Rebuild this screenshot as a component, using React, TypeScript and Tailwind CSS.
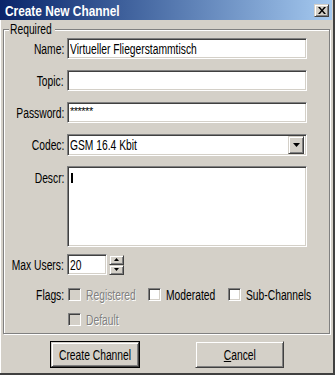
import React from "react";

const sunken =
  "border border-t-[#808080] border-l-[#808080] border-r-white border-b-white shadow-[inset_1px_1px_0_#404040,inset_-1px_-1px_0_#d4d0c8]";
const raised =
  "border border-t-[#d4d0c8] border-l-[#d4d0c8] border-r-[#404040] border-b-[#404040] shadow-[inset_1px_1px_0_#ffffff,inset_-1px_-1px_0_#808080] bg-[#d4d0c8]";

function T({ children, o = "l" }: { children: React.ReactNode; o?: "l" | "r" | "c" }) {
  const origin = o === "l" ? "origin-left" : o === "r" ? "origin-right" : "origin-center";
  return <span className={`inline-block whitespace-nowrap scale-x-[0.735] ${origin}`}>{children}</span>;
}

function Label({ children }: { children: React.ReactNode }) {
  return (
    <div className="w-[59px] shrink-0 flex justify-end leading-none">
      <T o="r">{children}</T>
    </div>
  );
}

function Row({ label, mt, children }: { label: string; mt: string; children: React.ReactNode }) {
  return (
    <div className={`flex items-center ${mt}`}>
      <Label>{label}</Label>
      <div className="ml-[3px]">{children}</div>
    </div>
  );
}

function Check({ label, disabled }: { label: string; disabled?: boolean }) {
  return (
    <div className="flex items-center w-[80px]">
      <div className={`w-[13px] h-[13px] shrink-0 ${sunken} ${disabled ? "bg-[#d4d0c8]" : "bg-white"}`} />
      <span
        className={`ml-[5px] leading-none ${
          disabled ? "text-[#808080] [text-shadow:1px_1px_0_#ffffff]" : "text-black"
        }`}
      >
        <T>{label}</T>
      </span>
    </div>
  );
}

export default function App() {
  return (
    <div className="w-[335px] h-[375px] bg-[#d4d0c8] border-r-2 border-b-2 border-[#404040] flex flex-col text-[14px] text-black font-['Liberation_Sans',Arial,sans-serif] overflow-hidden">
      <div className="h-[20px] mr-[1px] flex items-center bg-gradient-to-r from-[#0a246a] to-[#a6caf0] pl-[5px] pr-[3px] shrink-0">
        <span className="text-white font-bold text-[15px] leading-none inline-block whitespace-nowrap scale-x-[0.79] origin-left">
          Create New Channel
        </span>
        <div className={`ml-auto w-[15px] h-[13px] flex items-center justify-center ${raised}`}>
          <svg width="8" height="7" viewBox="0 0 8 7">
            <path d="M0 0h2l2 2.5L6 0h2L5 3.5 8 7H6L4 4.5 2 7H0l3-3.5z" fill="#000" />
          </svg>
        </div>
      </div>
      <div className="border-l border-white flex-1 flex flex-col">
        <div className="relative mt-[9px] ml-[2px] w-[327px] border border-[#808080] shadow-[1px_1px_0_#ffffff,inset_1px_1px_0_#ffffff] pt-[8px] pb-[7px] pl-[1px]">
          <div className="absolute -top-[8px] left-[5px] px-[1px] bg-[#d4d0c8] leading-none w-[46px]">
            <T>Required</T>
          </div>
          <Row label="Name:" mt="">
            <div className={`w-[240px] h-[21px] bg-white ${sunken} flex items-center pl-[2px] leading-none`}>
              <T>Virtueller Fliegerstammtisch</T>
            </div>
          </Row>
          <Row label="Topic:" mt="mt-[11px]">
            <div className={`w-[240px] h-[21px] bg-white ${sunken}`} />
          </Row>
          <Row label="Password:" mt="mt-[11px]">
            <div className={`w-[240px] h-[21px] bg-white ${sunken} pl-[2px] pt-[3px] text-[11px] leading-none tracking-[-0.5px]`}>
              ******
            </div>
          </Row>
          <Row label="Codec:" mt="mt-[11px]">
            <div className={`w-[240px] h-[22px] bg-white ${sunken} flex items-center pl-[2px] pr-[2px] leading-none`}>
              <T>GSM 16.4 Kbit</T>
              <div className={`ml-auto w-[16px] h-[18px] flex items-center justify-center ${raised}`}>
                <svg width="7" height="4" viewBox="0 0 7 4">
                  <path d="M0 0h7L3.5 4z" fill="#000" />
                </svg>
              </div>
            </div>
          </Row>
          <div className="flex mt-[10px]">
            <div className="pt-[5px]">
              <Label>Descr:</Label>
            </div>
            <div className={`ml-[3px] w-[240px] h-[81px] bg-white ${sunken} pl-[3px] pt-[6px]`}>
              <div className="w-[2px] h-[10px] bg-black" />
            </div>
          </div>
          <Row label="Max Users:" mt="mt-[7px]">
            <div className="flex items-center">
              <div className={`w-[40px] h-[21px] bg-white ${sunken} flex items-center pl-[2px] leading-none`}>
                <T>20</T>
              </div>
              <div className="ml-[2px] flex flex-col w-[15px]">
                <div className={`h-[10px] flex items-center justify-center ${raised}`}>
                  <svg width="5" height="3" viewBox="0 0 5 3">
                    <path d="M0 3h5L2.5 0z" fill="#000" />
                  </svg>
                </div>
                <div className={`h-[10px] flex items-center justify-center ${raised}`}>
                  <svg width="5" height="3" viewBox="0 0 5 3">
                    <path d="M0 0h5L2.5 3z" fill="#000" />
                  </svg>
                </div>
              </div>
            </div>
          </Row>
          <div className="flex items-center mt-[13px] h-[13px]">
            <Label>Flags:</Label>
            <div className="ml-[4px] flex items-center">
              <Check label="Registered" disabled />
              <Check label="Moderated" />
              <Check label="Sub-Channels" />
            </div>
          </div>
          <div className="flex items-center mt-[12px] h-[13px]">
            <div className="ml-[63px]">
              <Check label="Default" disabled />
            </div>
          </div>
        </div>
        <div className="flex mt-[7px] ml-[49px]">
          <div className="w-[90px] h-[27px] border border-black">
            <div className={`w-full h-full flex items-center justify-center leading-none ${raised}`}>
              <T o="c">Create Channel</T>
            </div>
          </div>
          <div className={`ml-[55px] w-[89px] h-[27px] flex items-center justify-center leading-none ${raised}`}>
            <T o="c">
              <span className="underline">C</span>ancel
            </T>
          </div>
        </div>
      </div>
    </div>
  );
}
